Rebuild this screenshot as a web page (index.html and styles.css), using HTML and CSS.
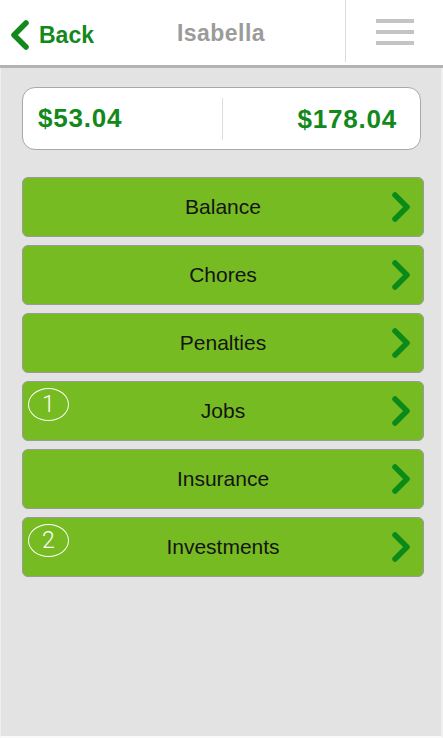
FILE: index.html
```html
<!DOCTYPE html>
<html lang="en">
<head>
    <meta charset="UTF-8">
    <meta name="viewport" content="width=device-width, initial-scale=1.0">
    <title>Isabella</title>
    <link rel="stylesheet" href="styles.css">
</head>
<body>
    <header class="top-bar">
        <a class="back" href="#">
            <svg class="back-icon" width="20" height="30" viewBox="0 0 20 30">
                <polyline points="16,3 4,15 16,27" />
            </svg>
            <span>Back</span>
        </a>
        <h1 class="title">Isabella</h1>
        <div class="menu">
            <span></span>
            <span></span>
            <span></span>
        </div>
    </header>
    <main class="content">
        <div class="summary">
            <div class="amount">$53.04</div>
            <div class="amount amount-right">$178.04</div>
        </div>
        <ul class="nav-list">
            <li class="nav-item">
                <span>Balance</span>
                <svg class="chevron" width="22" height="30" viewBox="0 0 22 30"><polyline points="5,3 17,15 5,27" /></svg>
            </li>
            <li class="nav-item">
                <span>Chores</span>
                <svg class="chevron" width="22" height="30" viewBox="0 0 22 30"><polyline points="5,3 17,15 5,27" /></svg>
            </li>
            <li class="nav-item">
                <span>Penalties</span>
                <svg class="chevron" width="22" height="30" viewBox="0 0 22 30"><polyline points="5,3 17,15 5,27" /></svg>
            </li>
            <li class="nav-item">
                <b class="badge">1</b>
                <span>Jobs</span>
                <svg class="chevron" width="22" height="30" viewBox="0 0 22 30"><polyline points="5,3 17,15 5,27" /></svg>
            </li>
            <li class="nav-item">
                <span>Insurance</span>
                <svg class="chevron" width="22" height="30" viewBox="0 0 22 30"><polyline points="5,3 17,15 5,27" /></svg>
            </li>
            <li class="nav-item">
                <b class="badge">2</b>
                <span>Investments</span>
                <svg class="chevron" width="22" height="30" viewBox="0 0 22 30"><polyline points="5,3 17,15 5,27" /></svg>
            </li>
        </ul>
    </main>
</body>
</html>
```

FILE: styles.css
```css
* {
    box-sizing: border-box;
    padding: 0;
    margin: 0;
}

:root {
    --bg-color: #e3e3e3;
    --green-dark: #13881b;
    --green-btn: #77bb22;
    --border-btn: #9a9a9a;
    --text-grey: #9b9b9b;
}

body {
    width: 443px;
    height: 738px;
    display: flex;
    flex-direction: column;
    background-color: var(--bg-color);
    font-family: "Liberation Sans", Arial, sans-serif;
}

.top-bar {
    height: 68px;
    display: flex;
    background-color: white;
    border-bottom: 3px solid #b3b3b3;
}

.back {
    width: 97px;
    display: flex;
    align-items: center;
    gap: 9px;
    padding-left: 10px;
    padding-top: 5px;
    color: var(--green-dark);
    text-decoration: none;
    font-weight: bold;
    font-size: 23px;
}

.back-icon polyline,
.chevron polyline {
    fill: none;
    stroke-width: 5.5;
    stroke-linecap: round;
    stroke-linejoin: round;
}

.back-icon polyline {
    stroke: var(--green-dark);
}

.title {
    flex: 1;
    text-align: center;
    align-self: center;
    padding-top: 2px;
    font-size: 23px;
    color: var(--text-grey);
    letter-spacing: .02em;
}

.menu {
    width: 98px;
    height: 62px;
    border-left: 1px solid #dcdcdc;
    display: flex;
    flex-direction: column;
    align-items: center;
    justify-content: center;
    gap: 7px;
    padding-top: 2px;
}

.menu span {
    width: 38px;
    height: 4px;
    background-color: #c4c4c4;
}

.content {
    flex: 1;
    padding: 19px 17px 0 21px;
    border-left: 1px solid #efefef;
    border-right: 2px solid #f0f0f0;
    border-bottom: 2px solid #fafafa;
}

.summary {
    width: 399px;
    height: 63px;
    display: flex;
    align-items: center;
    background-color: white;
    border: 1px solid #a8a8a8;
    border-radius: 13px;
}

.amount {
    width: 50%;
    padding: 0 15px;
    color: var(--green-dark);
    font-weight: bold;
    font-size: 26px;
    letter-spacing: .03em;
}

.amount-right {
    text-align: right;
    border-left: 1px solid #dedede;
    line-height: 42px;
    padding-right: 23px;
}

.nav-list {
    list-style: none;
    margin-top: 27px;
    display: flex;
    flex-direction: column;
    gap: 8px;
}

.nav-item {
    position: relative;
    height: 60px;
    display: flex;
    align-items: center;
    justify-content: center;
    background-color: var(--green-btn);
    border: 1px solid var(--border-btn);
    border-radius: 6px;
    font-size: 21px;
    color: #141414;
}

.chevron {
    position: absolute;
    right: 11px;
    top: 14px;
}

.chevron polyline {
    stroke: #0c8a19;
}

.badge {
    position: absolute;
    left: 5px;
    top: 6px;
    width: 41px;
    height: 33px;
    border: 1.5px solid white;
    border-radius: 50%;
    display: flex;
    align-items: center;
    justify-content: center;
    font-family: Roboto, sans-serif;
    font-weight: 300;
    font-size: 23px;
    color: white;
}
```
